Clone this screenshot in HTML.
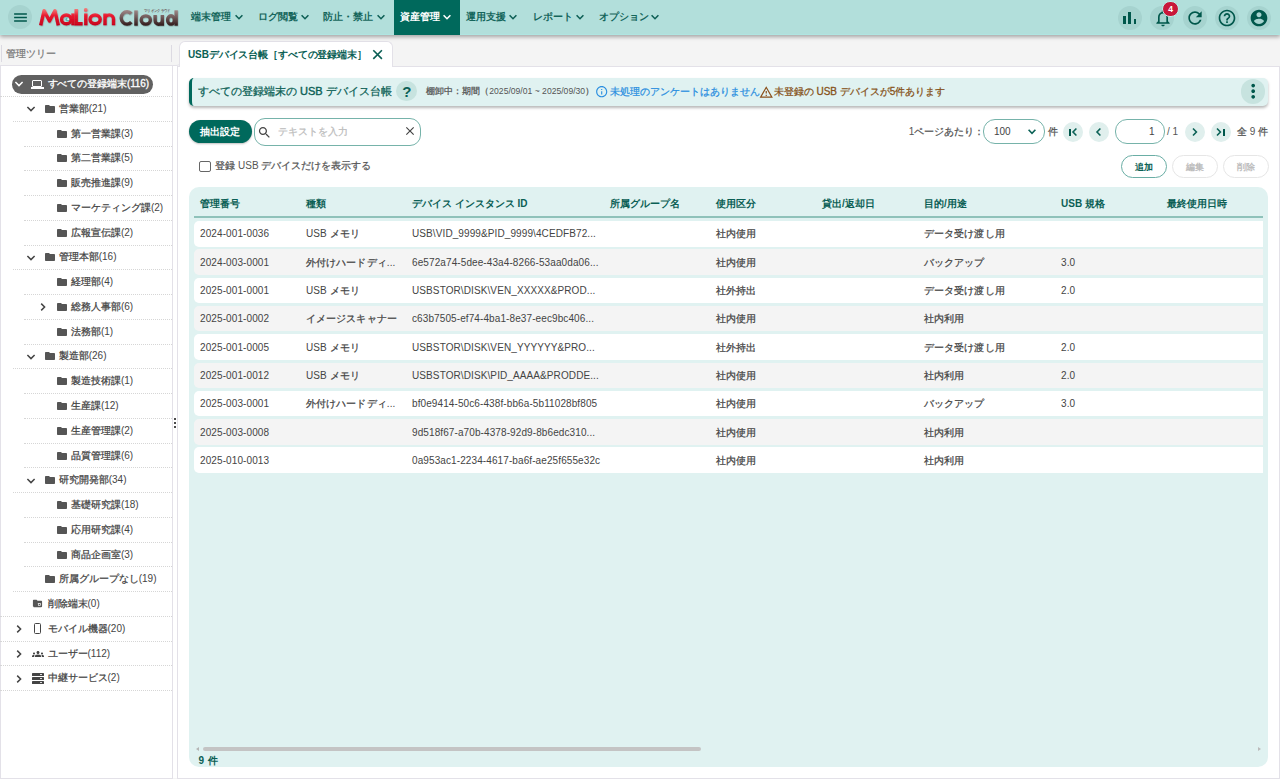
<!DOCTYPE html><html lang="ja"><head><meta charset="utf-8"><title>MaLion Cloud</title><style>
*{box-sizing:border-box;margin:0;padding:0}
html,body{width:1280px;height:779px;overflow:hidden;background:#f4f4f4;font-family:"Liberation Sans",sans-serif;color:#444;position:relative}
div{position:absolute}
.t{white-space:nowrap}.s{-webkit-text-stroke:0.25px currentColor}.t[style*='#fff'] .s{-webkit-text-stroke:0.3px #fff}
svg{position:absolute;overflow:visible}
</style></head><body>
<div style="left:0;top:65px;width:173px;height:714px;background:#fff;border-left:1px solid #e3e1e8;border-right:1px solid #e3e1e8;border-bottom:1px solid #e3e1e8"></div>
<div style="left:0;top:35px;width:179.8px;height:31px;background:#f4f4f4;border-bottom:1px solid #e3e1e8;border-bottom-right-radius:4px"></div>
<div style="left:171px;top:45px;width:1px;height:17px;background:#dcdae2"></div>
<div class="t " style="left:5.9px;top:45.50px;height:16px;line-height:16px;font-size:10px;color:#7a7a7a;"><span class="s">管理ツリー</span></div>
<div style="left:1px;top:45px;width:1.2px;height:17px;background:#dcdae2"></div>
<div style="left:0px;top:96.00px;width:172px;height:0;border-top:1px dotted #d6d6d6"></div>
<div style="left:11.7px;top:74.8px;width:141.5px;height:18.8px;border-radius:9.4px;background:#616161"></div>
<svg style="left:13.7px;top:78.90px" width="10" height="10"><polyline points="1.4,3 5,6.6 8.6,3" fill="none" stroke="#fff" stroke-width="1.5"/></svg>
<div style="left:32.3px;top:79.80px;width:9.6px;height:7px;border:1.5px solid #fff;border-radius:1px"></div>
<div style="left:31.2px;top:87.20px;width:12.4px;height:1.6px;background:#fff"></div>
<div class="t " style="left:47.5px;top:76.10px;height:16px;line-height:16px;font-size:10px;color:#fff;-webkit-text-stroke:0.3px #fff;letter-spacing:-0.08px;"><span class="s">すべての登録端末</span>(116)</div>
<div style="left:12.5px;top:120.76px;width:159.5px;height:0;border-top:1px dotted #d6d6d6"></div>
<svg style="left:26px;top:104.26px" width="10" height="10"><polyline points="1.4,3 5,6.6 8.6,3" fill="none" stroke="#444" stroke-width="1.5"/></svg>
<svg style="left:43.5px;top:102.86px;" width="12" height="12" viewBox="0 0 24 24"><path d="M10 4H4c-1.1 0-1.99.9-1.99 2L2 18c0 1.1.9 2 2 2h16c1.1 0 2-.9 2-2V8c0-1.1-.9-2-2-2h-8l-2-2z" fill="#555"/></svg>
<div class="t " style="left:58.7px;top:100.86px;height:16px;line-height:16px;font-size:10px;color:#444;"><span class="s">営業部</span>(21)</div>
<div style="left:24.4px;top:145.52px;width:147.6px;height:0;border-top:1px dotted #d6d6d6"></div>
<svg style="left:55.5px;top:127.62px;" width="12" height="12" viewBox="0 0 24 24"><path d="M10 4H4c-1.1 0-1.99.9-1.99 2L2 18c0 1.1.9 2 2 2h16c1.1 0 2-.9 2-2V8c0-1.1-.9-2-2-2h-8l-2-2z" fill="#555"/></svg>
<div class="t " style="left:70.9px;top:125.62px;height:16px;line-height:16px;font-size:10px;color:#444;"><span class="s">第一営業課</span>(3)</div>
<div style="left:24.4px;top:170.28px;width:147.6px;height:0;border-top:1px dotted #d6d6d6"></div>
<svg style="left:55.5px;top:152.38px;" width="12" height="12" viewBox="0 0 24 24"><path d="M10 4H4c-1.1 0-1.99.9-1.99 2L2 18c0 1.1.9 2 2 2h16c1.1 0 2-.9 2-2V8c0-1.1-.9-2-2-2h-8l-2-2z" fill="#555"/></svg>
<div class="t " style="left:70.9px;top:150.38px;height:16px;line-height:16px;font-size:10px;color:#444;"><span class="s">第二営業課</span>(5)</div>
<div style="left:24.4px;top:195.04px;width:147.6px;height:0;border-top:1px dotted #d6d6d6"></div>
<svg style="left:55.5px;top:177.14px;" width="12" height="12" viewBox="0 0 24 24"><path d="M10 4H4c-1.1 0-1.99.9-1.99 2L2 18c0 1.1.9 2 2 2h16c1.1 0 2-.9 2-2V8c0-1.1-.9-2-2-2h-8l-2-2z" fill="#555"/></svg>
<div class="t " style="left:70.9px;top:175.14px;height:16px;line-height:16px;font-size:10px;color:#444;"><span class="s">販売推進課</span>(9)</div>
<div style="left:24.4px;top:219.80px;width:147.6px;height:0;border-top:1px dotted #d6d6d6"></div>
<svg style="left:55.5px;top:201.9px;" width="12" height="12" viewBox="0 0 24 24"><path d="M10 4H4c-1.1 0-1.99.9-1.99 2L2 18c0 1.1.9 2 2 2h16c1.1 0 2-.9 2-2V8c0-1.1-.9-2-2-2h-8l-2-2z" fill="#555"/></svg>
<div class="t " style="left:70.9px;top:199.90px;height:16px;line-height:16px;font-size:10px;color:#444;"><span class="s">マーケティング課</span>(2)</div>
<div style="left:24.4px;top:244.56px;width:147.6px;height:0;border-top:1px dotted #d6d6d6"></div>
<svg style="left:55.5px;top:226.66px;" width="12" height="12" viewBox="0 0 24 24"><path d="M10 4H4c-1.1 0-1.99.9-1.99 2L2 18c0 1.1.9 2 2 2h16c1.1 0 2-.9 2-2V8c0-1.1-.9-2-2-2h-8l-2-2z" fill="#555"/></svg>
<div class="t " style="left:70.9px;top:224.66px;height:16px;line-height:16px;font-size:10px;color:#444;"><span class="s">広報宣伝課</span>(2)</div>
<div style="left:12.5px;top:269.32px;width:159.5px;height:0;border-top:1px dotted #d6d6d6"></div>
<svg style="left:26px;top:252.82px" width="10" height="10"><polyline points="1.4,3 5,6.6 8.6,3" fill="none" stroke="#444" stroke-width="1.5"/></svg>
<svg style="left:43.5px;top:251.42000000000002px;" width="12" height="12" viewBox="0 0 24 24"><path d="M10 4H4c-1.1 0-1.99.9-1.99 2L2 18c0 1.1.9 2 2 2h16c1.1 0 2-.9 2-2V8c0-1.1-.9-2-2-2h-8l-2-2z" fill="#555"/></svg>
<div class="t " style="left:58.7px;top:249.42px;height:16px;line-height:16px;font-size:10px;color:#444;"><span class="s">管理本部</span>(16)</div>
<div style="left:24.4px;top:294.08px;width:147.6px;height:0;border-top:1px dotted #d6d6d6"></div>
<svg style="left:55.5px;top:276.18px;" width="12" height="12" viewBox="0 0 24 24"><path d="M10 4H4c-1.1 0-1.99.9-1.99 2L2 18c0 1.1.9 2 2 2h16c1.1 0 2-.9 2-2V8c0-1.1-.9-2-2-2h-8l-2-2z" fill="#555"/></svg>
<div class="t " style="left:70.9px;top:274.18px;height:16px;line-height:16px;font-size:10px;color:#444;"><span class="s">経理部</span>(4)</div>
<div style="left:24.4px;top:318.84px;width:147.6px;height:0;border-top:1px dotted #d6d6d6"></div>
<svg style="left:37.7px;top:302.44px" width="10" height="10"><polyline points="3.2,1.6 6.6,5 3.2,8.4" fill="none" stroke="#444" stroke-width="1.5"/></svg>
<svg style="left:55.5px;top:300.94px;" width="12" height="12" viewBox="0 0 24 24"><path d="M10 4H4c-1.1 0-1.99.9-1.99 2L2 18c0 1.1.9 2 2 2h16c1.1 0 2-.9 2-2V8c0-1.1-.9-2-2-2h-8l-2-2z" fill="#555"/></svg>
<div class="t " style="left:70.9px;top:298.94px;height:16px;line-height:16px;font-size:10px;color:#444;"><span class="s">総務人事部</span>(6)</div>
<div style="left:24.4px;top:343.60px;width:147.6px;height:0;border-top:1px dotted #d6d6d6"></div>
<svg style="left:55.5px;top:325.70000000000005px;" width="12" height="12" viewBox="0 0 24 24"><path d="M10 4H4c-1.1 0-1.99.9-1.99 2L2 18c0 1.1.9 2 2 2h16c1.1 0 2-.9 2-2V8c0-1.1-.9-2-2-2h-8l-2-2z" fill="#555"/></svg>
<div class="t " style="left:70.9px;top:323.70px;height:16px;line-height:16px;font-size:10px;color:#444;"><span class="s">法務部</span>(1)</div>
<div style="left:12.5px;top:368.36px;width:159.5px;height:0;border-top:1px dotted #d6d6d6"></div>
<svg style="left:26px;top:351.86px" width="10" height="10"><polyline points="1.4,3 5,6.6 8.6,3" fill="none" stroke="#444" stroke-width="1.5"/></svg>
<svg style="left:43.5px;top:350.46000000000004px;" width="12" height="12" viewBox="0 0 24 24"><path d="M10 4H4c-1.1 0-1.99.9-1.99 2L2 18c0 1.1.9 2 2 2h16c1.1 0 2-.9 2-2V8c0-1.1-.9-2-2-2h-8l-2-2z" fill="#555"/></svg>
<div class="t " style="left:58.7px;top:348.46px;height:16px;line-height:16px;font-size:10px;color:#444;"><span class="s">製造部</span>(26)</div>
<div style="left:24.4px;top:393.12px;width:147.6px;height:0;border-top:1px dotted #d6d6d6"></div>
<svg style="left:55.5px;top:375.22px;" width="12" height="12" viewBox="0 0 24 24"><path d="M10 4H4c-1.1 0-1.99.9-1.99 2L2 18c0 1.1.9 2 2 2h16c1.1 0 2-.9 2-2V8c0-1.1-.9-2-2-2h-8l-2-2z" fill="#555"/></svg>
<div class="t " style="left:70.9px;top:373.22px;height:16px;line-height:16px;font-size:10px;color:#444;"><span class="s">製造技術課</span>(1)</div>
<div style="left:24.4px;top:417.88px;width:147.6px;height:0;border-top:1px dotted #d6d6d6"></div>
<svg style="left:55.5px;top:399.98px;" width="12" height="12" viewBox="0 0 24 24"><path d="M10 4H4c-1.1 0-1.99.9-1.99 2L2 18c0 1.1.9 2 2 2h16c1.1 0 2-.9 2-2V8c0-1.1-.9-2-2-2h-8l-2-2z" fill="#555"/></svg>
<div class="t " style="left:70.9px;top:397.98px;height:16px;line-height:16px;font-size:10px;color:#444;"><span class="s">生産課</span>(12)</div>
<div style="left:24.4px;top:442.64px;width:147.6px;height:0;border-top:1px dotted #d6d6d6"></div>
<svg style="left:55.5px;top:424.74px;" width="12" height="12" viewBox="0 0 24 24"><path d="M10 4H4c-1.1 0-1.99.9-1.99 2L2 18c0 1.1.9 2 2 2h16c1.1 0 2-.9 2-2V8c0-1.1-.9-2-2-2h-8l-2-2z" fill="#555"/></svg>
<div class="t " style="left:70.9px;top:422.74px;height:16px;line-height:16px;font-size:10px;color:#444;"><span class="s">生産管理課</span>(2)</div>
<div style="left:24.4px;top:467.40px;width:147.6px;height:0;border-top:1px dotted #d6d6d6"></div>
<svg style="left:55.5px;top:449.5px;" width="12" height="12" viewBox="0 0 24 24"><path d="M10 4H4c-1.1 0-1.99.9-1.99 2L2 18c0 1.1.9 2 2 2h16c1.1 0 2-.9 2-2V8c0-1.1-.9-2-2-2h-8l-2-2z" fill="#555"/></svg>
<div class="t " style="left:70.9px;top:447.50px;height:16px;line-height:16px;font-size:10px;color:#444;"><span class="s">品質管理課</span>(6)</div>
<div style="left:12.5px;top:492.16px;width:159.5px;height:0;border-top:1px dotted #d6d6d6"></div>
<svg style="left:26px;top:475.66px" width="10" height="10"><polyline points="1.4,3 5,6.6 8.6,3" fill="none" stroke="#444" stroke-width="1.5"/></svg>
<svg style="left:43.5px;top:474.26px;" width="12" height="12" viewBox="0 0 24 24"><path d="M10 4H4c-1.1 0-1.99.9-1.99 2L2 18c0 1.1.9 2 2 2h16c1.1 0 2-.9 2-2V8c0-1.1-.9-2-2-2h-8l-2-2z" fill="#555"/></svg>
<div class="t " style="left:58.7px;top:472.26px;height:16px;line-height:16px;font-size:10px;color:#444;"><span class="s">研究開発部</span>(34)</div>
<div style="left:24.4px;top:516.92px;width:147.6px;height:0;border-top:1px dotted #d6d6d6"></div>
<svg style="left:55.5px;top:499.02px;" width="12" height="12" viewBox="0 0 24 24"><path d="M10 4H4c-1.1 0-1.99.9-1.99 2L2 18c0 1.1.9 2 2 2h16c1.1 0 2-.9 2-2V8c0-1.1-.9-2-2-2h-8l-2-2z" fill="#555"/></svg>
<div class="t " style="left:70.9px;top:497.02px;height:16px;line-height:16px;font-size:10px;color:#444;"><span class="s">基礎研究課</span>(18)</div>
<div style="left:24.4px;top:541.68px;width:147.6px;height:0;border-top:1px dotted #d6d6d6"></div>
<svg style="left:55.5px;top:523.78px;" width="12" height="12" viewBox="0 0 24 24"><path d="M10 4H4c-1.1 0-1.99.9-1.99 2L2 18c0 1.1.9 2 2 2h16c1.1 0 2-.9 2-2V8c0-1.1-.9-2-2-2h-8l-2-2z" fill="#555"/></svg>
<div class="t " style="left:70.9px;top:521.78px;height:16px;line-height:16px;font-size:10px;color:#444;"><span class="s">応用研究課</span>(4)</div>
<div style="left:24.4px;top:566.44px;width:147.6px;height:0;border-top:1px dotted #d6d6d6"></div>
<svg style="left:55.5px;top:548.5400000000001px;" width="12" height="12" viewBox="0 0 24 24"><path d="M10 4H4c-1.1 0-1.99.9-1.99 2L2 18c0 1.1.9 2 2 2h16c1.1 0 2-.9 2-2V8c0-1.1-.9-2-2-2h-8l-2-2z" fill="#555"/></svg>
<div class="t " style="left:70.9px;top:546.54px;height:16px;line-height:16px;font-size:10px;color:#444;"><span class="s">商品企画室</span>(3)</div>
<div style="left:12.5px;top:591.20px;width:159.5px;height:0;border-top:1px dotted #d6d6d6"></div>
<svg style="left:43.5px;top:573.3000000000001px;" width="12" height="12" viewBox="0 0 24 24"><path d="M10 4H4c-1.1 0-1.99.9-1.99 2L2 18c0 1.1.9 2 2 2h16c1.1 0 2-.9 2-2V8c0-1.1-.9-2-2-2h-8l-2-2z" fill="#555"/></svg>
<div class="t " style="left:58.7px;top:571.30px;height:16px;line-height:16px;font-size:10px;color:#444;"><span class="s">所属グループなし</span>(19)</div>
<div style="left:0px;top:615.96px;width:172px;height:0;border-top:1px dotted #d6d6d6"></div>
<svg style="left:32.2px;top:598.36px;" width="11" height="11" viewBox="0 0 24 24"><path d="M10 4H4c-1.1 0-1.99.9-1.99 2L2 18c0 1.1.9 2 2 2h16c1.1 0 2-.9 2-2V8c0-1.1-.9-2-2-2h-8l-2-2z" fill="#555"/><rect x="13" y="11" width="6" height="6" rx="1" fill="#fff"/><rect x="14.5" y="12.5" width="3" height="3" fill="#555"/></svg>
<div class="t " style="left:47.5px;top:596.06px;height:16px;line-height:16px;font-size:10px;color:#444;"><span class="s">削除端末</span>(0)</div>
<div style="left:0px;top:640.72px;width:172px;height:0;border-top:1px dotted #d6d6d6"></div>
<svg style="left:13.7px;top:624.32px" width="10" height="10"><polyline points="3.2,1.6 6.6,5 3.2,8.4" fill="none" stroke="#444" stroke-width="1.5"/></svg>
<div style="left:34.1px;top:622.92px;width:7px;height:11px;border:1.3px solid #444;border-radius:1.5px"></div>
<div class="t " style="left:47.5px;top:620.82px;height:16px;line-height:16px;font-size:10px;color:#444;"><span class="s">モバイル機器</span>(20)</div>
<div style="left:0px;top:665.48px;width:172px;height:0;border-top:1px dotted #d6d6d6"></div>
<svg style="left:13.7px;top:649.08px" width="10" height="10"><polyline points="3.2,1.6 6.6,5 3.2,8.4" fill="none" stroke="#444" stroke-width="1.5"/></svg>
<svg style="left:31.6px;top:648.1800000000001px;" width="12" height="12" viewBox="0 0 24 24"><path d="M12 12.75c1.63 0 3.07.39 4.24.9 1.08.48 1.76 1.56 1.76 2.73V18H6v-1.61c0-1.18.68-2.26 1.76-2.73 1.17-.52 2.61-.91 4.24-.91zM4 13c1.1 0 2-.9 2-2s-.9-2-2-2-2 .9-2 2 .9 2 2 2zm1.13 1.1c-.37-.06-.74-.1-1.13-.1-.99 0-1.93.21-2.78.58C.48 14.9 0 15.62 0 16.43V18h4.5v-1.61c0-.83.23-1.61.63-2.29zM20 13c1.1 0 2-.9 2-2s-.9-2-2-2-2 .9-2 2 .9 2 2 2zm4 3.43c0-.81-.48-1.53-1.22-1.85-.85-.37-1.790-.58-2.78-.58-.39 0-.76.04-1.13.1.4.68.63 1.46.63 2.29V18H24v-1.57zM12 6c1.66 0 3 1.34 3 3s-1.34 3-3 3-3-1.34-3-3 1.34-3 3-3z" fill="#444"/></svg>
<div class="t " style="left:47.5px;top:645.58px;height:16px;line-height:16px;font-size:10px;color:#444;"><span class="s">ユーザー</span>(112)</div>
<div style="left:0px;top:690.24px;width:172px;height:0;border-top:1px dotted #d6d6d6"></div>
<svg style="left:13.7px;top:673.84px" width="10" height="10"><polyline points="3.2,1.6 6.6,5 3.2,8.4" fill="none" stroke="#444" stroke-width="1.5"/></svg>
<div style="left:31.6px;top:673px;width:12.4px;height:3px;background:#444;border-radius:.6px"></div>
<div style="left:40.3px;top:674px;width:2.2px;height:1px;background:#ddd"></div>
<div style="left:31.6px;top:677px;width:12.4px;height:3px;background:#444;border-radius:.6px"></div>
<div style="left:40.3px;top:678px;width:2.2px;height:1px;background:#ddd"></div>
<div style="left:31.6px;top:681px;width:12.4px;height:3px;background:#444;border-radius:.6px"></div>
<div style="left:40.3px;top:682px;width:2.2px;height:1px;background:#ddd"></div>
<div class="t " style="left:47.5px;top:670.34px;height:16px;line-height:16px;font-size:10px;color:#444;"><span class="s">中継サービス</span>(2)</div>
<div style="left:173px;top:66px;width:4px;height:712px;background:#fff"></div>
<div style="left:173.8px;top:418.0px;width:2.2px;height:2.2px;border-radius:50%;background:#111"></div>
<div style="left:173.8px;top:421.8px;width:2.2px;height:2.2px;border-radius:50%;background:#111"></div>
<div style="left:173.8px;top:425.6px;width:2.2px;height:2.2px;border-radius:50%;background:#111"></div>
<div style="left:176.6px;top:66px;width:1103.4px;height:713px;background:#fff;border:1px solid #e3e1e8"></div>
<div style="left:179.3px;top:41px;width:213.5px;height:26px;background:#fff;border:1px solid #e3e1e8;border-bottom:none;border-radius:6px 6px 0 0"></div>
<div class="t " style="left:188px;top:46.50px;height:16px;line-height:16px;font-size:10px;color:#0b5f55;font-weight:bold;letter-spacing:-0.12px;">USBデバイス台帳［すべての登録端末］</div>
<svg style="left:372px;top:49px" width="11" height="11"><path d="M1.3,1.3 L9.9,9.9 M9.9,1.3 L1.3,9.9" stroke="#0b5f55" stroke-width="1.6"/></svg>
<div style="left:188.7px;top:77.6px;width:1079.3px;height:28.1px;background:#e0f2f1;border-left:3px solid #00695c;border-radius:5px;box-shadow:0 2px 3px rgba(0,0,0,.28)"></div>
<div class="t " style="left:198px;top:82.80px;height:17px;line-height:17px;font-size:11px;color:#0b5f55;-webkit-text-stroke:0.4px currentColor;"><span class="s">すべての登録端末の</span> USB <span class="s">デバイス台帳</span></div>
<div style="left:396.2px;top:81.1px;width:20.4px;height:20.4px;border-radius:50%;background:#c7e3df"></div>
<div class="t " style="left:402.2px;top:80.20px;height:24px;line-height:24px;font-size:15px;color:#0b5f55;font-weight:bold;">?</div>
<div class="t " style="left:426.3px;top:85.00px;height:13px;line-height:13px;font-size:8.6px;color:#555;"><span class="s">棚卸中：期間（</span>2025/09/01 ~ 2025/09/30<span class="s">）</span></div>
<svg style="left:595px;top:85px;" width="13.4" height="13.4" viewBox="0 0 24 24"><path d="M11 7h2v2h-2zm0 4h2v6h-2zm1-9C6.48 2 2 6.48 2 12s4.48 10 10 10 10-4.48 10-10S17.52 2 12 2zm0 18c-4.41 0-8-3.59-8-8s3.59-8 8-8 8 3.59 8 8-3.59 8-8 8z" fill="#2b8fe0"/></svg>
<div class="t " style="left:609.6px;top:83.50px;height:16px;line-height:16px;font-size:10px;color:#2b8fe0;"><span class="s">未処理のアンケートはありません</span></div>
<svg style="left:758.5px;top:84.5px;" width="14.5" height="14.5" viewBox="0 0 24 24"><path d="M12 5.99L19.53 19H4.47L12 5.99M12 2L1 21h22L12 2zm1 14h-2v2h2v-2zm0-6h-2v4h2v-4z" fill="#8a4f1a"/></svg>
<div class="t " style="left:773.7px;top:83.50px;height:16px;line-height:16px;font-size:10px;color:#86521a;-webkit-text-stroke:0.3px currentColor;"><span class="s">未登録の</span> USB <span class="s">デバイスが</span>5<span class="s">件あります</span></div>
<div style="left:1240.7px;top:79.2px;width:24.4px;height:24.4px;border-radius:50%;background:#c7e3df"></div>
<svg style="left:1241.7px;top:80.4px;" width="22.4" height="22.4" viewBox="0 0 24 24"><path d="M12 8c1.1 0 2-.9 2-2s-.9-2-2-2-2 .9-2 2 .9 2 2 2zm0 2c-1.1 0-2 .9-2 2s.9 2 2 2 2-.9 2-2-.9-2-2-2zm0 6c-1.1 0-2 .9-2 2s.9 2 2 2 2-.9 2-2-.9-2-2-2z" fill="#00574b"/></svg>
<div style="left:188.7px;top:119.8px;width:63px;height:23.7px;border-radius:12px;background:#00695c;box-shadow:0 1px 2px rgba(0,0,0,.25)"></div>
<div class="t " style="left:199.5px;top:123.60px;height:16px;line-height:16px;font-size:10px;color:#fff;font-weight:bold;">抽出設定</div>
<div style="left:254px;top:118.3px;width:167px;height:27.3px;border-radius:11px;border:1.3px solid #76b3aa;background:#fff"></div>
<svg style="left:257.1px;top:124.6px;" width="15" height="15" viewBox="0 0 24 24"><path d="M15.5 14h-.79l-.28-.27C15.41 12.59 16 11.11 16 9.5 16 5.91 13.09 3 9.5 3S3 5.91 3 9.5 5.91 16 9.5 16c1.61 0 3.09-.59 4.23-1.57l.27.28v.79l5 4.99L20.49 19l-4.99-5zm-6 0C7.01 14 5 11.99 5 9.5S7.01 5 9.5 5 14 7.01 14 9.5 11.99 14 9.5 14z" fill="#444"/></svg>
<div class="t " style="left:278.4px;top:123.60px;height:16px;line-height:16px;font-size:10px;color:#bdbdbd;"><span class="s">テキストを入力</span></div>
<svg style="left:402.5px;top:124px;" width="14" height="14" viewBox="0 0 24 24"><path d="M19 6.41L17.59 5 12 10.59 6.41 5 5 6.41 10.59 12 5 17.59 6.41 19 12 13.410 17.59 19 19 17.59 13.41 12z" fill="#444"/></svg>
<div class="t " style="left:908.8px;top:123.80px;height:16px;line-height:16px;font-size:10px;color:#555;">1<span class="s">ページあたり：</span></div>
<div style="left:983.4px;top:119.4px;width:61.3px;height:24.2px;border-radius:12px;border:1.3px solid #76b3aa;background:#fff"></div>
<div class="t " style="left:994px;top:123.60px;height:16px;line-height:16px;font-size:10px;color:#444;">100</div>
<svg style="left:1027px;top:127px" width="10" height="10"><polyline points="1.6,2.8 5,6.4 8.4,2.8" fill="none" stroke="#0b6156" stroke-width="1.6"/></svg>
<div class="t " style="left:1047.5px;top:123.80px;height:16px;line-height:16px;font-size:10px;color:#555;"><span class="s">件</span></div>
<div style="left:1062.8px;top:121.7px;width:20.4px;height:20.4px;border-radius:50%;background:#e0efed"></div>
<div style="left:1069.0px;top:128.5px;width:1.6px;height:7.1px;background:#00574b"></div>
<svg style="left:1072px;top:127px" width="10" height="10"><polyline points="4.4,1.5 1,5 4.4,8.5" fill="none" stroke="#0b6156" stroke-width="1.6"/></svg>
<div style="left:1089.0px;top:121.7px;width:20.4px;height:20.4px;border-radius:50%;background:#e0efed"></div>
<svg style="left:1096.2px;top:127px" width="10" height="10"><polyline points="4.4,1.5 1,5 4.4,8.5" fill="none" stroke="#0b6156" stroke-width="1.6"/></svg>
<div style="left:1184.6px;top:121.7px;width:20.4px;height:20.4px;border-radius:50%;background:#e0efed"></div>
<svg style="left:1192.3999999999999px;top:127px" width="10" height="10"><polyline points="1,1.5 4.4,5 1,8.5" fill="none" stroke="#0b6156" stroke-width="1.6"/></svg>
<div style="left:1210.8px;top:121.7px;width:20.4px;height:20.4px;border-radius:50%;background:#e0efed"></div>
<svg style="left:1216.4px;top:127px" width="10" height="10"><polyline points="1,1.5 4.4,5 1,8.5" fill="none" stroke="#0b6156" stroke-width="1.6"/></svg>
<div style="left:1223.4px;top:128.5px;width:1.6px;height:7.1px;background:#00574b"></div>
<div style="left:1115px;top:119.4px;width:50px;height:24.2px;border-radius:12px;border:1.3px solid #76b3aa;background:#fff"></div>
<div class="t " style="left:1149px;top:123.60px;height:16px;line-height:16px;font-size:10px;color:#444;">1</div>
<div class="t " style="left:1167px;top:123.80px;height:16px;line-height:16px;font-size:10px;color:#555;">/ 1</div>
<div class="t " style="left:1237px;top:123.80px;height:16px;line-height:16px;font-size:10px;color:#555;"><span class="s">全</span> 9 <span class="s">件</span></div>
<div style="left:199px;top:161px;width:11.5px;height:11px;border:1.3px solid #666;border-radius:2px"></div>
<div class="t " style="left:215.3px;top:158.40px;height:16px;line-height:16px;font-size:10px;color:#555;"><span class="s">登録</span> USB <span class="s">デバイスだけを表示する</span></div>
<div style="left:1121px;top:154.5px;width:45.5px;height:23.5px;border-radius:12px;border:1.5px solid #6aaea5;background:#fff"></div>
<div class="t " style="left:1134.7px;top:159.50px;height:14px;line-height:14px;font-size:9px;color:#0b5f55;font-weight:bold;">追加</div>
<div style="left:1172px;top:154.5px;width:45.5px;height:23.5px;border-radius:12px;border:1.5px solid #e6e6e6;background:#fff"></div>
<div class="t " style="left:1185.7px;top:159.50px;height:14px;line-height:14px;font-size:9px;color:#bdbdbd;font-weight:bold;">編集</div>
<div style="left:1223px;top:154.5px;width:45.5px;height:23.5px;border-radius:12px;border:1.5px solid #e6e6e6;background:#fff"></div>
<div class="t " style="left:1236.7px;top:159.50px;height:14px;line-height:14px;font-size:9px;color:#bdbdbd;font-weight:bold;">削除</div>
<div style="left:188.9px;top:186.7px;width:1079.1px;height:580.2px;border-radius:10px;background:#e0f2f1"></div>
<div class="t " style="left:200px;top:196.20px;height:16px;line-height:16px;font-size:10px;color:#0b5f55;font-weight:bold;">管理番号</div>
<div class="t " style="left:306px;top:196.20px;height:16px;line-height:16px;font-size:10px;color:#0b5f55;font-weight:bold;">種類</div>
<div class="t " style="left:412px;top:196.20px;height:16px;line-height:16px;font-size:10px;color:#0b5f55;font-weight:bold;">デバイス インスタンス ID</div>
<div class="t " style="left:610px;top:196.20px;height:16px;line-height:16px;font-size:10px;color:#0b5f55;font-weight:bold;">所属グループ名</div>
<div class="t " style="left:716px;top:196.20px;height:16px;line-height:16px;font-size:10px;color:#0b5f55;font-weight:bold;">使用区分</div>
<div class="t " style="left:822px;top:196.20px;height:16px;line-height:16px;font-size:10px;color:#0b5f55;font-weight:bold;">貸出/返却日</div>
<div class="t " style="left:924px;top:196.20px;height:16px;line-height:16px;font-size:10px;color:#0b5f55;font-weight:bold;">目的/用途</div>
<div class="t " style="left:1061px;top:196.20px;height:16px;line-height:16px;font-size:10px;color:#0b5f55;font-weight:bold;">USB 規格</div>
<div class="t " style="left:1167px;top:196.20px;height:16px;line-height:16px;font-size:10px;color:#0b5f55;font-weight:bold;">最終使用日時</div>
<div style="left:194.2px;top:215.6px;width:1068.5px;height:2px;background:#8fc2ba"></div>
<div style="left:194.2px;top:221.00px;width:1068.5px;height:25.5px;border-radius:5px 0 0 5px;background:#fff"></div>
<div class="t " style="left:200px;top:226.40px;height:16px;line-height:16px;font-size:10px;color:#444;letter-spacing:0.1px;">2024-001-0036</div>
<div class="t " style="left:306px;top:226.40px;height:16px;line-height:16px;font-size:10px;color:#444;letter-spacing:0.1px;">USB <span class="s">メモリ</span></div>
<div class="t " style="left:412px;top:226.40px;height:16px;line-height:16px;font-size:10px;color:#444;letter-spacing:0.1px;">USB\VID_9999&amp;PID_9999\4CEDFB72...</div>
<div class="t " style="left:716px;top:226.40px;height:16px;line-height:16px;font-size:10px;color:#444;letter-spacing:0.1px;"><span class="s">社内使用</span></div>
<div class="t " style="left:924px;top:226.40px;height:16px;line-height:16px;font-size:10px;color:#444;letter-spacing:0.1px;"><span class="s">データ受け渡し用</span></div>
<div style="left:194.2px;top:249.30px;width:1068.5px;height:25.5px;border-radius:5px 0 0 5px;background:#f4f4f4"></div>
<div class="t " style="left:200px;top:254.70px;height:16px;line-height:16px;font-size:10px;color:#444;letter-spacing:0.1px;">2024-003-0001</div>
<div class="t " style="left:306px;top:254.70px;height:16px;line-height:16px;font-size:10px;color:#444;letter-spacing:0.1px;"><span class="s">外付けハードディ</span>...</div>
<div class="t " style="left:412px;top:254.70px;height:16px;line-height:16px;font-size:10px;color:#444;letter-spacing:0.1px;">6e572a74-5dee-43a4-8266-53aa0da06...</div>
<div class="t " style="left:716px;top:254.70px;height:16px;line-height:16px;font-size:10px;color:#444;letter-spacing:0.1px;"><span class="s">社内使用</span></div>
<div class="t " style="left:924px;top:254.70px;height:16px;line-height:16px;font-size:10px;color:#444;letter-spacing:0.1px;"><span class="s">バックアップ</span></div>
<div class="t " style="left:1061px;top:254.70px;height:16px;line-height:16px;font-size:10px;color:#444;letter-spacing:0.1px;">3.0</div>
<div style="left:194.2px;top:277.60px;width:1068.5px;height:25.5px;border-radius:5px 0 0 5px;background:#fff"></div>
<div class="t " style="left:200px;top:283.00px;height:16px;line-height:16px;font-size:10px;color:#444;letter-spacing:0.1px;">2025-001-0001</div>
<div class="t " style="left:306px;top:283.00px;height:16px;line-height:16px;font-size:10px;color:#444;letter-spacing:0.1px;">USB <span class="s">メモリ</span></div>
<div class="t " style="left:412px;top:283.00px;height:16px;line-height:16px;font-size:10px;color:#444;letter-spacing:0.1px;">USBSTOR\DISK\VEN_XXXXX&amp;PROD...</div>
<div class="t " style="left:716px;top:283.00px;height:16px;line-height:16px;font-size:10px;color:#444;letter-spacing:0.1px;"><span class="s">社外持出</span></div>
<div class="t " style="left:924px;top:283.00px;height:16px;line-height:16px;font-size:10px;color:#444;letter-spacing:0.1px;"><span class="s">データ受け渡し用</span></div>
<div class="t " style="left:1061px;top:283.00px;height:16px;line-height:16px;font-size:10px;color:#444;letter-spacing:0.1px;">2.0</div>
<div style="left:194.2px;top:305.90px;width:1068.5px;height:25.5px;border-radius:5px 0 0 5px;background:#f4f4f4"></div>
<div class="t " style="left:200px;top:311.30px;height:16px;line-height:16px;font-size:10px;color:#444;letter-spacing:0.1px;">2025-001-0002</div>
<div class="t " style="left:306px;top:311.30px;height:16px;line-height:16px;font-size:10px;color:#444;letter-spacing:0.1px;"><span class="s">イメージスキャナー</span></div>
<div class="t " style="left:412px;top:311.30px;height:16px;line-height:16px;font-size:10px;color:#444;letter-spacing:0.1px;">c63b7505-ef74-4ba1-8e37-eec9bc406...</div>
<div class="t " style="left:716px;top:311.30px;height:16px;line-height:16px;font-size:10px;color:#444;letter-spacing:0.1px;"><span class="s">社内使用</span></div>
<div class="t " style="left:924px;top:311.30px;height:16px;line-height:16px;font-size:10px;color:#444;letter-spacing:0.1px;"><span class="s">社内利用</span></div>
<div style="left:194.2px;top:334.20px;width:1068.5px;height:25.5px;border-radius:5px 0 0 5px;background:#fff"></div>
<div class="t " style="left:200px;top:339.60px;height:16px;line-height:16px;font-size:10px;color:#444;letter-spacing:0.1px;">2025-001-0005</div>
<div class="t " style="left:306px;top:339.60px;height:16px;line-height:16px;font-size:10px;color:#444;letter-spacing:0.1px;">USB <span class="s">メモリ</span></div>
<div class="t " style="left:412px;top:339.60px;height:16px;line-height:16px;font-size:10px;color:#444;letter-spacing:0.1px;">USBSTOR\DISK\VEN_YYYYYY&amp;PRO...</div>
<div class="t " style="left:716px;top:339.60px;height:16px;line-height:16px;font-size:10px;color:#444;letter-spacing:0.1px;"><span class="s">社外持出</span></div>
<div class="t " style="left:924px;top:339.60px;height:16px;line-height:16px;font-size:10px;color:#444;letter-spacing:0.1px;"><span class="s">データ受け渡し用</span></div>
<div class="t " style="left:1061px;top:339.60px;height:16px;line-height:16px;font-size:10px;color:#444;letter-spacing:0.1px;">2.0</div>
<div style="left:194.2px;top:362.50px;width:1068.5px;height:25.5px;border-radius:5px 0 0 5px;background:#f4f4f4"></div>
<div class="t " style="left:200px;top:367.90px;height:16px;line-height:16px;font-size:10px;color:#444;letter-spacing:0.1px;">2025-001-0012</div>
<div class="t " style="left:306px;top:367.90px;height:16px;line-height:16px;font-size:10px;color:#444;letter-spacing:0.1px;">USB <span class="s">メモリ</span></div>
<div class="t " style="left:412px;top:367.90px;height:16px;line-height:16px;font-size:10px;color:#444;letter-spacing:0.1px;">USBSTOR\DISK\PID_AAAA&amp;PRODDE...</div>
<div class="t " style="left:716px;top:367.90px;height:16px;line-height:16px;font-size:10px;color:#444;letter-spacing:0.1px;"><span class="s">社内使用</span></div>
<div class="t " style="left:924px;top:367.90px;height:16px;line-height:16px;font-size:10px;color:#444;letter-spacing:0.1px;"><span class="s">社内利用</span></div>
<div class="t " style="left:1061px;top:367.90px;height:16px;line-height:16px;font-size:10px;color:#444;letter-spacing:0.1px;">2.0</div>
<div style="left:194.2px;top:390.80px;width:1068.5px;height:25.5px;border-radius:5px 0 0 5px;background:#fff"></div>
<div class="t " style="left:200px;top:396.20px;height:16px;line-height:16px;font-size:10px;color:#444;letter-spacing:0.1px;">2025-003-0001</div>
<div class="t " style="left:306px;top:396.20px;height:16px;line-height:16px;font-size:10px;color:#444;letter-spacing:0.1px;"><span class="s">外付けハードディ</span>...</div>
<div class="t " style="left:412px;top:396.20px;height:16px;line-height:16px;font-size:10px;color:#444;letter-spacing:0.1px;">bf0e9414-50c6-438f-bb6a-5b11028bf805</div>
<div class="t " style="left:716px;top:396.20px;height:16px;line-height:16px;font-size:10px;color:#444;letter-spacing:0.1px;"><span class="s">社内使用</span></div>
<div class="t " style="left:924px;top:396.20px;height:16px;line-height:16px;font-size:10px;color:#444;letter-spacing:0.1px;"><span class="s">バックアップ</span></div>
<div class="t " style="left:1061px;top:396.20px;height:16px;line-height:16px;font-size:10px;color:#444;letter-spacing:0.1px;">3.0</div>
<div style="left:194.2px;top:419.10px;width:1068.5px;height:25.5px;border-radius:5px 0 0 5px;background:#f4f4f4"></div>
<div class="t " style="left:200px;top:424.50px;height:16px;line-height:16px;font-size:10px;color:#444;letter-spacing:0.1px;">2025-003-0008</div>
<div class="t " style="left:412px;top:424.50px;height:16px;line-height:16px;font-size:10px;color:#444;letter-spacing:0.1px;">9d518f67-a70b-4378-92d9-8b6edc310...</div>
<div class="t " style="left:716px;top:424.50px;height:16px;line-height:16px;font-size:10px;color:#444;letter-spacing:0.1px;"><span class="s">社内使用</span></div>
<div class="t " style="left:924px;top:424.50px;height:16px;line-height:16px;font-size:10px;color:#444;letter-spacing:0.1px;"><span class="s">社内利用</span></div>
<div style="left:194.2px;top:447.40px;width:1068.5px;height:25.5px;border-radius:5px 0 0 5px;background:#fff"></div>
<div class="t " style="left:200px;top:452.80px;height:16px;line-height:16px;font-size:10px;color:#444;letter-spacing:0.1px;">2025-010-0013</div>
<div class="t " style="left:412px;top:452.80px;height:16px;line-height:16px;font-size:10px;color:#444;letter-spacing:0.1px;">0a953ac1-2234-4617-ba6f-ae25f655e32c</div>
<div class="t " style="left:716px;top:452.80px;height:16px;line-height:16px;font-size:10px;color:#444;letter-spacing:0.1px;"><span class="s">社内使用</span></div>
<div class="t " style="left:924px;top:452.80px;height:16px;line-height:16px;font-size:10px;color:#444;letter-spacing:0.1px;"><span class="s">社内利用</span></div>
<div style="left:202.8px;top:746.8px;width:497.8px;height:4.4px;border-radius:2.2px;background:#c4c4c4"></div>
<div style="left:196.3px;top:746.8px;width:0;height:0;border-top:2.3px solid transparent;border-bottom:2.3px solid transparent;border-right:3.4px solid #b5b5b5"></div>
<div style="left:1257.5px;top:747px;width:0;height:0;border-top:2.5px solid transparent;border-bottom:2.5px solid transparent;border-left:3.5px solid #bbb"></div>
<div class="t " style="left:198.6px;top:752.60px;height:16px;line-height:16px;font-size:10px;color:#0b5f55;font-weight:600;letter-spacing:0.5px;">9 件</div>
<div style="left:0;top:0;width:1280px;height:35px;background:#b2dfdb;border-bottom:1px solid #afe5e1;box-shadow:0 2px 4px rgba(0,0,0,.33)"></div>
<div style="left:8px;top:5.3px;width:24.2px;height:24.2px;border-radius:50%;background:#a6d3cf"></div>
<svg style="left:11.5px;top:8.8px;" width="17" height="17" viewBox="0 0 24 24"><path d="M3 18h18v-2H3v2zm0-5h18v-2H3v2zm0-7v2h18V6H3z" fill="#00574b"/></svg>
<svg style="left:0;top:0" width="200" height="35"><defs>
<linearGradient id="gr" gradientUnits="userSpaceOnUse" x1="0" y1="9" x2="0" y2="26"><stop offset="0" stop-color="#f27a78"/><stop offset=".4" stop-color="#e8192e"/><stop offset="1" stop-color="#c4021c"/></linearGradient>
<linearGradient id="gb" gradientUnits="userSpaceOnUse" x1="0" y1="10" x2="0" y2="26"><stop offset="0" stop-color="#a08a8a"/><stop offset=".5" stop-color="#6a5454"/><stop offset="1" stop-color="#2e1818"/></linearGradient>
<filter id="sh" x="-5%" y="-20%" width="110%" height="150%"><feDropShadow dx="0.4" dy="0.6" stdDeviation="0.45" flood-color="#000" flood-opacity=".3"/></filter></defs>
<g filter="url(#sh)" fill="none" stroke-linecap="butt">
<g stroke="url(#gr)" stroke-width="3.4">
<path d="M40.7,25.3 L44.1,10.7 L49.5,21 L54.9,10.7 L58.3,25.3" stroke-linejoin="round"/>
<ellipse cx="66.3" cy="19.4" rx="4.75" ry="4.4"/>
<path d="M73,13.4 V25.3"/>
<path d="M76.2,9 V23.8 H82.6"/>
<path d="M85.8,13.4 V25.3"/>
<ellipse cx="95.1" cy="19.35" rx="5.1" ry="4.4"/>
<path d="M105,13.4 V25.3 M105,19.1 A4.25,4.25 0 0 1 113.5,19.1 V25.3"/>
</g>
<circle cx="85.7" cy="9.9" r="1.9" fill="url(#gr)"/>
<g stroke="url(#gb)" stroke-width="3.4">
<path d="M131.3,13.7 A5.8,6.2 0 1 0 131.3,22.1"/>
<path d="M136,10.4 V25.7" stroke-width="3.5"/>
<ellipse cx="145.8" cy="20" rx="4.6" ry="4.1"/>
<path d="M155.15,14.9 V20.6 A3.6,3.6 0 0 0 162.35,20.6 V14.9 M162.35,14.9 V25.7"/>
<ellipse cx="171" cy="19.95" rx="3.4" ry="4.2"/>
<path d="M176.15,10.3 V25.7"/>
</g></g>
<circle cx="67.4" cy="19.5" r="2" fill="#5fb8b1"/><circle cx="68.1" cy="19.1" r=".9" fill="#fff"/>
<text x="144" y="12.1" font-family="Liberation Sans" font-size="3.6" font-weight="bold" fill="#6a5858" textLength="26.8" lengthAdjust="spacingAndGlyphs">マリオンクラウド</text>
</svg>
<div style="left:393.6px;top:0;width:66.4px;height:35px;background:#00695c"></div>
<div class="t nav" style="left:191.25px;top:8.60px;height:16px;line-height:16px;font-size:10px;color:#15665b;font-weight:bold;">端末管理</div>
<div class="t nav" style="left:257.8px;top:8.60px;height:16px;line-height:16px;font-size:10px;color:#15665b;font-weight:bold;">ログ閲覧</div>
<div class="t nav" style="left:323.4px;top:8.60px;height:16px;line-height:16px;font-size:10px;color:#15665b;font-weight:bold;">防止・禁止</div>
<div class="t nav" style="left:399.8px;top:8.60px;height:16px;line-height:16px;font-size:10px;color:#fff;font-weight:bold;">資産管理</div>
<div class="t nav" style="left:466px;top:8.60px;height:16px;line-height:16px;font-size:10px;color:#15665b;font-weight:bold;">運用支援</div>
<div class="t nav" style="left:533px;top:8.60px;height:16px;line-height:16px;font-size:10px;color:#15665b;font-weight:bold;">レポート</div>
<div class="t nav" style="left:598.8px;top:8.60px;height:16px;line-height:16px;font-size:10px;color:#15665b;font-weight:bold;">オプション</div>
<svg style="left:233.5px;top:12px" width="10" height="10"><polyline points="1.6,3.3 5,6.7 8.4,3.3" fill="none" stroke="#0d5f55" stroke-width="1.6"/></svg>
<svg style="left:299.9px;top:12px" width="10" height="10"><polyline points="1.6,3.3 5,6.7 8.4,3.3" fill="none" stroke="#0d5f55" stroke-width="1.6"/></svg>
<svg style="left:375.8px;top:12px" width="10" height="10"><polyline points="1.6,3.3 5,6.7 8.4,3.3" fill="none" stroke="#0d5f55" stroke-width="1.6"/></svg>
<svg style="left:442.1px;top:12px" width="10" height="10"><polyline points="1.6,3.3 5,6.7 8.4,3.3" fill="none" stroke="#fff" stroke-width="1.6"/></svg>
<svg style="left:508.29999999999995px;top:12px" width="10" height="10"><polyline points="1.6,3.3 5,6.7 8.4,3.3" fill="none" stroke="#0d5f55" stroke-width="1.6"/></svg>
<svg style="left:574.5px;top:12px" width="10" height="10"><polyline points="1.6,3.3 5,6.7 8.4,3.3" fill="none" stroke="#0d5f55" stroke-width="1.6"/></svg>
<svg style="left:650px;top:12px" width="10" height="10"><polyline points="1.6,3.3 5,6.7 8.4,3.3" fill="none" stroke="#0d5f55" stroke-width="1.6"/></svg>
<div style="left:1117.7px;top:5.7px;width:24.2px;height:24.2px;border-radius:50%;background:#a6d3cf"></div>
<div style="left:1150.1px;top:5.7px;width:24.2px;height:24.2px;border-radius:50%;background:#a6d3cf"></div>
<div style="left:1182.5px;top:5.7px;width:24.2px;height:24.2px;border-radius:50%;background:#a6d3cf"></div>
<div style="left:1214.8px;top:5.7px;width:24.2px;height:24.2px;border-radius:50%;background:#a6d3cf"></div>
<div style="left:1247.3px;top:5.7px;width:24.2px;height:24.2px;border-radius:50%;background:#a6d3cf"></div>
<div style="left:1123.3px;top:15.8px;width:2.8px;height:8.6px;background:#00574b"></div><div style="left:1128.4px;top:11.9px;width:3px;height:12.5px;background:#00574b"></div><div style="left:1133.5px;top:18.8px;width:2.8px;height:5.6px;background:#00574b"></div>
<svg style="left:1152.8px;top:8px;" width="20" height="20" viewBox="0 0 24 24"><path d="M12 22c1.1 0 2-.9 2-2h-4c0 1.1.89 2 2 2zm6-6v-5c0-3.07-1.64-5.64-4.5-6.32V4c0-.83-.67-1.5-1.5-1.5s-1.5.67-1.5 1.5v.68C7.63 5.36 6 7.920 6 11v5l-2 2v1h16v-1l-2-2zm-2 1H8v-6c0-2.48 1.51-4.5 4-4.5s4 2.02 4 4.5v6z" fill="#00574b"/></svg>
<svg style="left:1184.6px;top:8.1px;" width="20" height="20" viewBox="0 0 24 24"><path d="M17.65 6.35C16.2 4.9 14.21 4 12 4c-4.42 0-7.99 3.58-7.99 8s3.57 8 7.99 8c3.73 0 6.84-2.55 7.73-6h-2.08c-.82 2.330-3.04 4-5.65 4-3.31 0-6-2.69-6-6s2.69-6 6-6c1.66 0 3.14.69 4.22 1.78L13 11h7V4l-2.35 2.35z" fill="#00574b"/></svg>
<svg style="left:1216.9px;top:8.1px;" width="20" height="20" viewBox="0 0 24 24"><path d="M11 18h2v-2h-2v2zm1-16C6.48 2 2 6.48 2 12s4.48 10 10 10 10-4.48 10-10S17.52 2 12 2zm0 18c-4.41 0-8-3.59-8-8s3.59-8 8-8 8 3.59 8 8-3.59 8-8 8zm0-14c-2.21 0-4 1.79-4 4h2c0-1.1.9-2 2-2s2 .9 2 2c0 2-3 1.75-3 5h2c0-2.25 3-2.5 3-5 0-2.210-1.79-4-4-4z" fill="#00574b"/></svg>
<svg style="left:1249.4px;top:8.1px;" width="20" height="20" viewBox="0 0 24 24"><path d="M12 2C6.48 2 2 6.48 2 12s4.48 10 10 10 10-4.48 10-10S17.52 2 12 2zm0 3c1.66 0 3 1.34 3 3s-1.34 3-3 3-3-1.34-3-3 1.34-3 3-3zm0 14.2c-2.5 0-4.71-1.28-6-3.22.03-1.99 4-3.08 6-3.080 1.99 0 5.97 1.09 6 3.08-1.29 1.94-3.5 3.22-6 3.22z" fill="#00574b"/></svg>
<div style="left:1162.3px;top:0.6px;width:16.6px;height:16.6px;border-radius:50%;background:#c8173a;border:1.3px solid #bdf2ed"></div>
<div class="t " style="left:1168.2px;top:2.60px;height:13px;line-height:13px;font-size:8.5px;color:#fff;font-weight:bold;">4</div>
</body></html>
